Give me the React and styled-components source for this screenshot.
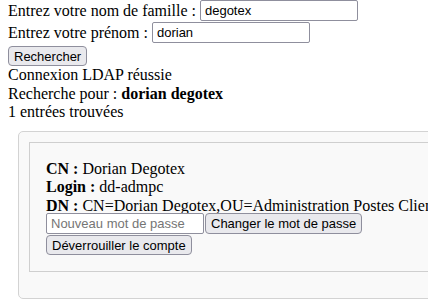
import React from "react"
import styled, { createGlobalStyle } from "styled-components"

const GlobalStyle = createGlobalStyle`
  body {
    margin: 0 0 0 8px;
    font-family: "Liberation Serif", "Times New Roman", serif;
    font-size: 16px;
    color: #000;
    background: #fff;
  }
`

const Page = styled.div`
  width: calc(100vw - 8px);
  overflow: hidden;
`

const Row = styled.div`
  line-height: 18.5px;
  white-space: nowrap;
`

const FieldRow = styled.div`
  display: flex;
  align-items: flex-start;
  height: 22px;
  line-height: 21px;
  white-space: nowrap;
`

const TextInput = styled.input`
  box-sizing: border-box;
  flex: none;
  height: ${(p) => p.$h || 21}px;
  width: ${(p) => p.$w}px;
  margin-left: 4px;
  padding: 1px 4px;
  border: 1px solid #8f8f9d;
  border-radius: 2px;
  background: #fff;
  font-family: "Liberation Sans", Arial, sans-serif;
  font-size: 13px;
  color: #000;
  outline: none;
  &::placeholder {
    color: #757575;
  }
`

const Button = styled.button`
  box-sizing: border-box;
  flex: none;
  height: ${(p) => p.$h || 20}px;
  padding: 0 ${(p) => p.$px || 5}px;
  margin: ${(p) => p.$m || "0"};
  border: 1px solid #8f8f9d;
  border-radius: 4px;
  background: #e9e9ed;
  font-family: "Liberation Sans", Arial, sans-serif;
  font-size: 13px;
  color: #000;
  white-space: nowrap;
`

const ButtonRow = styled.div`
  padding-top: 2px;
  height: 20px;
`

const Outer = styled.div`
  margin: 9px 0 0 10px;
  width: 640px;
  padding: 10px 10px 26px 10px;
  border: 1px solid #d3d3d3;
  border-radius: 5px;
  background: #f9f9f9;
`

const Inner = styled.div`
  border: 1px solid #cfcfcf;
  padding: 17px 16px 16px 16px;
`

const Entry = styled.div`
  line-height: 18.5px;
  white-space: nowrap;
`

const ActionRow = styled.div`
  display: flex;
  align-items: center;
  margin-top: ${(p) => p.$mt || 0}px;
  & > input {
    margin-left: 0;
  }
`

export default function App() {
  return (
    <Page>
      <GlobalStyle />
      <FieldRow>
        Entrez votre nom de famille :
        <TextInput $w={158} defaultValue="degotex" />
      </FieldRow>
      <FieldRow>
        Entrez votre prénom :
        <TextInput $w={158} defaultValue="dorian" />
      </FieldRow>
      <ButtonRow>
        <Button>Rechercher</Button>
      </ButtonRow>
      <Row>Connexion LDAP réussie</Row>
      <Row>
        Recherche pour : <b>dorian degotex</b>
      </Row>
      <Row>1 entrées trouvées</Row>
      <Outer>
        <Inner>
          <Entry>
            <b>CN :</b> Dorian Degotex
          </Entry>
          <Entry>
            <b>Login :</b> dd-admpc
          </Entry>
          <Entry>
            <b>DN :</b> CN=Dorian Degotex,OU=Administration Postes Clients,OU=Utilisateurs,DC=domaine,DC=local
          </Entry>
          <ActionRow $mt={-2}>
            <TextInput $w={158} $h={21} placeholder="Nouveau mot de passe" />
            <Button $h={21} $m="0 0 0 1px">Changer le mot de passe</Button>
          </ActionRow>
          <ActionRow $mt={1}>
            <Button $h={20}>Déverrouiller le compte</Button>
          </ActionRow>
        </Inner>
      </Outer>
    </Page>
  )
}
